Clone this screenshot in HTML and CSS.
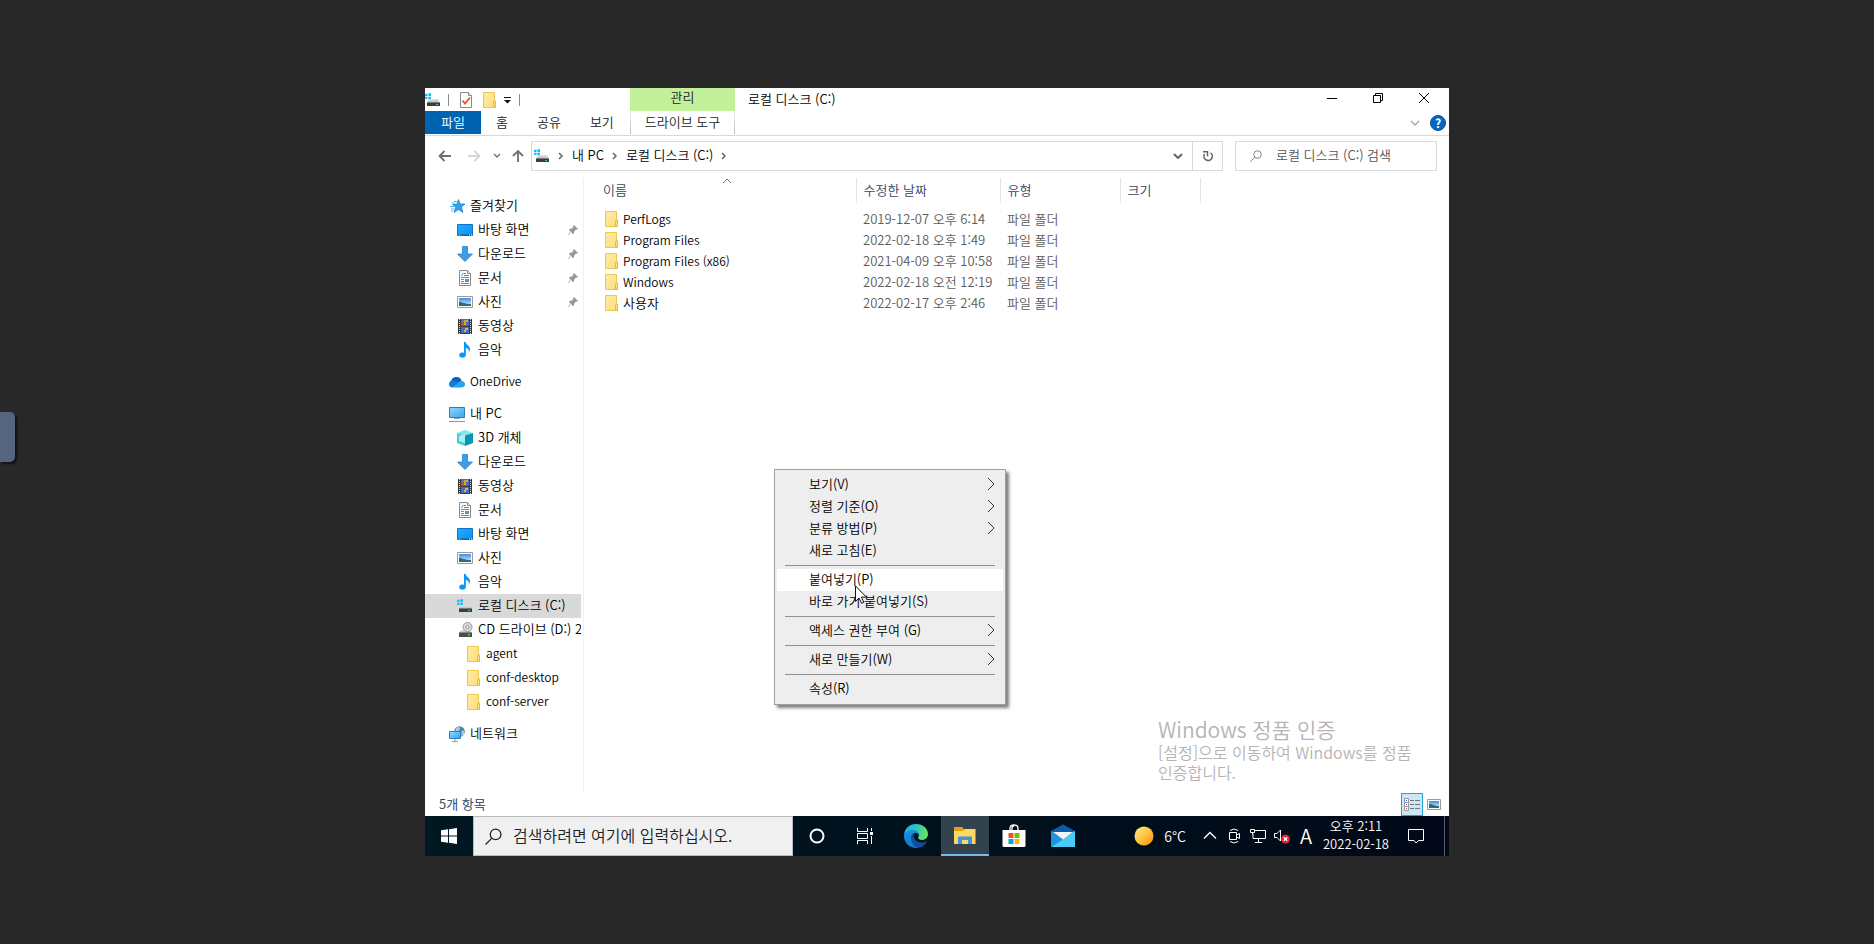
FILE: index.html
```html
<!DOCTYPE html>
<html lang="ko">
<head>
    <meta charset="UTF-8">
    <meta name="viewport" content="width=device-width, initial-scale=1.0">
    <title>로컬 디스크 (C:)</title>
    <link rel="stylesheet" href="styles.css">
</head>
<body>
    <!-- shared icons -->
    <svg class="defs" aria-hidden="true">
        <linearGradient id="g-folder" x1="0" y1="0" x2="1" y2="1"><stop offset="0" stop-color="#ffeca6"/><stop offset="1" stop-color="#fbdc7b"/></linearGradient>
        <linearGradient id="g-blue" x1="0" y1="0" x2="1" y2="1"><stop offset="0" stop-color="#2aa9ff"/><stop offset="1" stop-color="#0a8ff5"/></linearGradient>
        <linearGradient id="g-screen" x1="0" y1="0" x2="1" y2="1"><stop offset="0" stop-color="#8ed8ff"/><stop offset="1" stop-color="#35a5ee"/></linearGradient>
        <linearGradient id="g-sky" x1="0" y1="0" x2="0" y2="1"><stop offset="0" stop-color="#3d8de0"/><stop offset="1" stop-color="#e3f3fb"/></linearGradient>
        <linearGradient id="g-drive" x1="0" y1="0" x2="0" y2="1"><stop offset="0" stop-color="#e4e4e4"/><stop offset="1" stop-color="#b5b5b5"/></linearGradient>
        <symbol id="i-folder" viewBox="-1 0 16 16">
            <path d="M1.500.5h11v9h1v6h-12z" fill="url(#g-folder)" stroke="#ebc84f"/>
            <path d="M11.500 15v-5l1-1h1v6z" fill="#fbe08a" stroke="#e4bd40"/>
        </symbol>
        <symbol id="i-drive" viewBox="0 0 16 16">
            <path d="M0 2l2.500-.4V4H0zM3.300 1.500L6 1v3H3.300zM0 4.800h2.500V7L0 6.700zM3.300 4.800H6v2.700l-2.700-.4z" fill="#19bdf2"/>
            <path d="M4 7h9l2 4H2z" fill="url(#g-drive)"/>
            <path d="M2 10.500h13V14H2z" fill="#3c3c3c"/>
            <path d="M11 12h2v1h-2z" fill="#3fe04a"/>
        </symbol>
        <symbol id="i-cd" viewBox="0 0 16 16">
            <path d="M4 8h9l2 3H2z" fill="url(#g-drive)"/>
            <circle cx="10.500" cy="5" r="4.500" fill="#d9d9d9" stroke="#9a9a9a"/>
            <circle cx="10.500" cy="5" r="1.500" fill="#fff" stroke="#8a8a8a"/>
            <path d="M2 10.500h13V15H2z" fill="#4c4c4c"/>
            <path d="M11 12h2v1.500h-2z" fill="#3fe04a"/>
        </symbol>
        <symbol id="i-star" viewBox="-1 0 16 16">
            <path d="M8.500 1.500L10.300 6H15l-3.600 3 1.600 5.500-4.500-3-4.500 3L5.700 9.300 2.500 6.500 7 6z" fill="#2da0ee" stroke="#1480d0" stroke-width=".7"/>
            <path d="M4 3.500h3M2 5h3M0 8.500h4M1 11h3.500M1 13h2" stroke="#5bb8f3"/>
        </symbol>
        <symbol id="i-desktop" viewBox="0 0 16 16">
            <path d="M.5 2.500h15v11H.5z" fill="url(#g-blue)" stroke="#0b74c5"/>
            <path d="M1 13h14" stroke="#0d5c9c"/>
            <path d="M2 13h1M12 13h1M14 13h1" stroke="#fff"/>
        </symbol>
        <symbol id="i-down" viewBox="0 0 16 16">
            <path d="M5.500.5h5V8h5L8 15.500.5 8h5z" fill="#3f9be8" stroke="#2c83d0" stroke-width=".8"/>
        </symbol>
        <symbol id="i-doc" viewBox="0 0 16 16">
            <path d="M2.500.5h8l3 3v12h-11z" fill="#fff" stroke="#8a8a8a"/>
            <path d="M10.500.5v3h3" fill="#eee" stroke="#8a8a8a"/>
            <path d="M4.500 6L6.500 3M7 3.500h2M7 5.500h5M4 7.500h8M4 9.500h3M4 11.500h3M4 13.500h8" stroke="#2f9adf"/>
            <path d="M8 9h4v3H8z" fill="#5d93b5"/>
        </symbol>
        <symbol id="i-pic" viewBox="0 0 16 16">
            <path d="M.5 2.500h15v11H.5z" fill="#fff" stroke="#9a9a9a"/>
            <path d="M2 4h12v8H2z" fill="url(#g-sky)"/>
            <path d="M2 8c4 0 5 2 12 2v2H2z" fill="#35697a"/>
        </symbol>
        <symbol id="i-video" viewBox="0 0 16 16">
            <path d="M1 1h14v15H1z" fill="#3a3a3a"/>
            <path d="M2.500 1v15M13.500 1v15" stroke="#ddd" stroke-dasharray="1 1"/>
            <path d="M4 1h8v7H4zM4 9h8v6H4z" fill="#3f6fc8"/>
            <path d="M7 2h4v2H9v3H6V5z" fill="#d9a531"/>
            <path d="M5 4h2v3H5z" fill="#b55248"/>
            <path d="M8 10h3v2H9v2H7v-2h1z" fill="#e5b92e"/>
        </symbol>
        <symbol id="i-music" viewBox="0 0 16 16">
            <ellipse cx="5.500" cy="13" rx="3.300" ry="2.600" fill="#0a97f5"/>
            <path d="M7 0h1.800c.2 3 4.700 4 4.200 7.500-.2 1.500-.7 2-1.300 2.800.8-2.800-.9-3.900-2.900-4.300V13H7z" fill="#0a97f5"/>
        </symbol>
        <symbol id="i-cloud" viewBox="0 0 16 16">
            <path d="M2 9C2 5 4 3 7.500 3c3 0 4.500 1.500 5 4L8 12z" fill="#0a62ba"/>
            <path d="M3.500 13.500C1 13.500 0 12 0 10c0-2.500 2-4 4-3.700L11 9z" fill="#117dd8"/>
            <path d="M3 13.500L10 8c3-2 6-.5 6 2.500 0 2-1.500 3-3.500 3z" fill="#27a4ee"/>
        </symbol>
        <symbol id="i-pc" viewBox="0 0 16 16">
            <path d="M.5 1.500h15v10H.5z" fill="url(#g-screen)" stroke="#3479ad"/>
            <path d="M5 12.500h6" stroke="#9aa7b1"/>
            <path d="M0 15.500h16" stroke="#8496a5"/>
        </symbol>
        <symbol id="i-cube" viewBox="0 0 16 16">
            <path d="M0 3l8-3 8 3-8 3z" fill="#87e4ea"/>
            <path d="M0 3l8 2.500V16l-8-3z" fill="#41cfd9"/>
            <path d="M16 3L8 5.500V16l8-3z" fill="#0796ad"/>
            <path d="M2 6l6-2v9l-6-2z" fill="#a9f0f2"/>
        </symbol>
        <symbol id="i-net" viewBox="0 0 16 16">
            <circle cx="10.500" cy="5.500" r="5.300" fill="#3f87ab"/>
            <path d="M7 2c2-2 5-1 4 1S9 5 9 7H6zM13 4l2 1v4l-3 1z" fill="#a3cddb"/>
            <path d="M.5 5.500h11v7H.5z" fill="url(#g-screen)" stroke="#2f7fba"/>
            <path d="M6 13v2M3 15.500h6" stroke="#8fa0ac"/>
        </symbol>
        <symbol id="i-pin" viewBox="0 0 10 10">
            <path d="M6 0l4 4-1 .8-1-.2-1.800 2L6 8.800l-1 .2-1.900-2L.5 10 0 9.500 2.800 6.800 1 5l.2-1 2.200-.2 2-1.800L5.200 1z" fill="#8d99a3"/>
        </symbol>
        <symbol id="i-sub" viewBox="0 0 8 14"><path d="M1 1l6 6-6 6" fill="none" stroke="#333"/></symbol>
        <symbol id="i-crumb" viewBox="0 0 6 8"><path d="M1 1l3 3-3 3" fill="none" stroke="#666" stroke-width="1.500"/></symbol>
        <symbol id="i-chev" viewBox="0 0 10 6"><path d="M1 1l4 4 4-4" fill="none" stroke="currentColor" stroke-width="1.500"/></symbol>
        <symbol id="i-search" viewBox="0 0 16 16"><circle cx="10" cy="6" r="5" fill="none" stroke="currentColor" stroke-width="1.200"/><path d="M6.500 9.500L.5 15.500" stroke="currentColor" stroke-width="1.200"/></symbol>
    </svg>

    <button class="handle" aria-label="메뉴 열기"></button>

    <main class="screen">
        <header class="ribbon">
            <div class="quick">
                <svg class="ico"><use href="#i-drive"/></svg>
                <span class="bar"></span>
                <button aria-label="속성"><svg class="ico" viewBox="0 0 16 16"><path d="M2.500.5h8l3 3v12h-11z" fill="#fff" stroke="#8a8a8a"/><path d="M10.500.5v3h3" fill="#eee" stroke="#8a8a8a"/><path d="M4.500 8.500l2.500 3 5-6" fill="none" stroke="#e0582a" stroke-width="1.800"/></svg></button>
                <button aria-label="새 폴더"><svg class="ico"><use href="#i-folder"/></svg></button>
                <button aria-label="사용자 지정"><svg class="small" viewBox="0 0 8 8"><path d="M0 1.500h7" stroke="#111"/><path d="M0 4h7L3.500 7.500z" fill="#111"/></svg></button>
                <span class="bar"></span>
            </div>
            <div class="context-tab">관리</div>
            <div class="caption">
                <span class="caption-text">로컬 디스크 (C:)</span>
                <button class="win-btn" aria-label="최소화"><svg viewBox="0 0 10 10"><path d="M0 5.500h10" stroke="#000"/></svg></button>
                <button class="win-btn" aria-label="이전 크기로"><svg viewBox="0 0 10 10"><path d="M.5 2.500h7v7h-7zM2.500 2V.5h7v7H8" fill="none" stroke="#000"/></svg></button>
                <button class="win-btn" aria-label="닫기"><svg viewBox="0 0 10 10"><path d="M0 0l10 10M10 0L0 10" stroke="#000"/></svg></button>
            </div>
            <div class="tabs">
                <button class="tab file">파일</button>
                <button class="tab">홈</button>
                <button class="tab">공유</button>
                <button class="tab">보기</button>
            </div>
            <button class="tab drive-tab">드라이브 도구</button>
            <div class="ribbon-end">
                <button aria-label="리본 확장"><svg class="chev light"><use href="#i-chev"/></svg></button>
                <button class="help" aria-label="도움말">?</button>
            </div>
        </header>

        <div class="address-row">
            <button class="go" aria-label="뒤로"><svg viewBox="0 0 14 12"><path d="M13 6H2M6.500 1L1.500 6l5 5" fill="none" stroke="#707070" stroke-width="1.800"/></svg></button>
            <button class="go" aria-label="앞으로"><svg viewBox="0 0 14 12"><path d="M1 6h11M7.500 1l5 5-5 5" fill="none" stroke="#d5d5d5" stroke-width="1.800"/></svg></button>
            <button class="go recent" aria-label="최근 위치"><svg viewBox="0 0 10 6"><path d="M2 1l3 3 3-3" fill="none" stroke="#777" stroke-width="1.500"/></svg></button>
            <button class="go up" aria-label="위로"><svg viewBox="0 0 14 14"><path d="M7 13V2M2 7l5-5 5 5" fill="none" stroke="#707070" stroke-width="1.800"/></svg></button>
            <div class="address">
                <svg class="ico"><use href="#i-drive"/></svg>
                <svg class="crumb"><use href="#i-crumb"/></svg>
                <a href="#">내 PC</a>
                <svg class="crumb"><use href="#i-crumb"/></svg>
                <a href="#">로컬 디스크 (C:)</a>
                <svg class="crumb"><use href="#i-crumb"/></svg>
                <button class="history" aria-label="이전 위치"><svg class="chev" viewBox="0 0 10 6"><path d="M1 1l4 4 4-4" fill="none" stroke="#666" stroke-width="2"/></svg></button>
                <button class="refresh" aria-label="새로 고침"><svg viewBox="0 0 12 12"><path d="M8.500 2.800A4.200 4.200 0 1 1 2.600 4" fill="none" stroke="#666" stroke-width="1.600"/><path d="M1 1.800h4.500v4.500" fill="none" stroke="#666" stroke-width="1.500"/></svg></button>
            </div>
            <label class="find">
                <svg viewBox="0 0 16 16"><use href="#i-search"/></svg>
                <input type="text" placeholder="로컬 디스크 (C:) 검색" aria-label="로컬 디스크 (C:) 검색">
            </label>
        </div>

        <div class="content">
            <nav class="tree">
                <ul>
                    <li><a href="#"><svg class="ico"><use href="#i-star"/></svg>즐겨찾기</a></li>
                    <li class="sub"><a href="#"><svg class="ico"><use href="#i-desktop"/></svg>바탕 화면<svg class="pin"><use href="#i-pin"/></svg></a></li>
                    <li class="sub"><a href="#"><svg class="ico"><use href="#i-down"/></svg>다운로드<svg class="pin"><use href="#i-pin"/></svg></a></li>
                    <li class="sub"><a href="#"><svg class="ico"><use href="#i-doc"/></svg>문서<svg class="pin"><use href="#i-pin"/></svg></a></li>
                    <li class="sub"><a href="#"><svg class="ico"><use href="#i-pic"/></svg>사진<svg class="pin"><use href="#i-pin"/></svg></a></li>
                    <li class="sub"><a href="#"><svg class="ico"><use href="#i-video"/></svg>동영상</a></li>
                    <li class="sub"><a href="#"><svg class="ico"><use href="#i-music"/></svg>음악</a></li>
                </ul>
                <ul>
                    <li class="latin"><a href="#"><svg class="ico"><use href="#i-cloud"/></svg>OneDrive</a></li>
                </ul>
                <ul>
                    <li><a href="#"><svg class="ico"><use href="#i-pc"/></svg>내 PC</a></li>
                    <li class="sub"><a href="#"><svg class="ico"><use href="#i-cube"/></svg>3D 개체</a></li>
                    <li class="sub"><a href="#"><svg class="ico"><use href="#i-down"/></svg>다운로드</a></li>
                    <li class="sub"><a href="#"><svg class="ico"><use href="#i-video"/></svg>동영상</a></li>
                    <li class="sub"><a href="#"><svg class="ico"><use href="#i-doc"/></svg>문서</a></li>
                    <li class="sub"><a href="#"><svg class="ico"><use href="#i-desktop"/></svg>바탕 화면</a></li>
                    <li class="sub"><a href="#"><svg class="ico"><use href="#i-pic"/></svg>사진</a></li>
                    <li class="sub"><a href="#"><svg class="ico"><use href="#i-music"/></svg>음악</a></li>
                    <li class="sub selected"><a href="#"><svg class="ico"><use href="#i-drive"/></svg>로컬 디스크 (C:)</a></li>
                    <li class="sub"><a href="#"><svg class="ico"><use href="#i-cd"/></svg>CD 드라이브 (D:) 2</a></li>
                    <li class="sub2 latin"><a href="#"><svg class="ico"><use href="#i-folder"/></svg>agent</a></li>
                    <li class="sub2 latin"><a href="#"><svg class="ico"><use href="#i-folder"/></svg>conf-desktop</a></li>
                    <li class="sub2 latin"><a href="#"><svg class="ico"><use href="#i-folder"/></svg>conf-server</a></li>
                </ul>
                <ul>
                    <li><a href="#"><svg class="ico"><use href="#i-net"/></svg>네트워크</a></li>
                </ul>
            </nav>

            <section class="files">
                <table>
                    <thead>
                        <tr>
                            <th class="c-name">이름<svg class="sort" viewBox="0 0 10 6"><path d="M1 5l4-4 4 4" fill="none" stroke="#777"/></svg></th>
                            <th class="c-date">수정한 날짜</th>
                            <th class="c-type">유형</th>
                            <th class="c-size">크기</th>
                        </tr>
                    </thead>
                    <tbody>
                        <tr><td><span class="name latin"><svg class="ico"><use href="#i-folder"/></svg>PerfLogs</span></td><td>2019-12-07 오후 6:14</td><td>파일 폴더</td><td></td></tr>
                        <tr><td><span class="name latin"><svg class="ico"><use href="#i-folder"/></svg>Program Files</span></td><td>2022-02-18 오후 1:49</td><td>파일 폴더</td><td></td></tr>
                        <tr><td><span class="name latin"><svg class="ico"><use href="#i-folder"/></svg>Program Files (x86)</span></td><td>2021-04-09 오후 10:58</td><td>파일 폴더</td><td></td></tr>
                        <tr><td><span class="name latin"><svg class="ico"><use href="#i-folder"/></svg>Windows</span></td><td>2022-02-18 오전 12:19</td><td>파일 폴더</td><td></td></tr>
                        <tr><td><span class="name"><svg class="ico"><use href="#i-folder"/></svg>사용자</span></td><td>2022-02-17 오후 2:46</td><td>파일 폴더</td><td></td></tr>
                    </tbody>
                </table>
                <div class="watermark">
                    <p class="wm-title">Windows 정품 인증</p>
                    <p>[설정]으로 이동하여 Windows를 정품<br>인증합니다.</p>
                </div>
            </section>
        </div>

        <div class="status">
            <span class="count">5개 항목</span>
            <button class="view on" aria-label="자세히"><svg viewBox="0 0 16 14"><path d="M.5.500h4v4h-4zM.5 4.500h4v4h-4zM.5 8.500h4v4h-4z" fill="#fff" stroke="#999"/><path d="M6 2.500h4M11 2.500h5M6 6.500h4M11 6.500h5M6 10.500h4M11 10.500h5" stroke="#777"/><path d="M2 2h1v1H2zM2 6h1v1H2z" fill="#46c"/><path d="M2 10h1v1H2z" fill="#d33"/></svg></button>
            <button class="view" aria-label="큰 아이콘"><svg viewBox="0 0 16 14"><path d="M1.500 1.500h13v10h-13z" fill="#fff" stroke="#999"/><path d="M3 3h10v7H3z" fill="url(#g-sky)"/><path d="M3 6c4 0 5 2 10 2v2H3z" fill="#35697a"/></svg></button>
        </div>

        <footer class="taskbar">
            <button class="start" aria-label="시작"><svg viewBox="0 0 16 16"><path d="M0 2.300l7-1v6.200H0zM8 1.200L16 0v7.500H8zM0 8.500h7v6.200l-7-1zM8 8.500h8V16l-8-1.200z" fill="#fff"/></svg></button>
            <label class="task-search">
                <svg viewBox="0 0 16 16"><use href="#i-search"/></svg>
                <input type="text" placeholder="검색하려면 여기에 입력하십시오." aria-label="검색하려면 여기에 입력하십시오.">
            </label>
            <button class="task" aria-label="Cortana"><svg viewBox="0 0 24 24"><circle cx="12" cy="12" r="6.500" fill="none" stroke="#fff" stroke-width="2"/></svg></button>
            <button class="task" aria-label="작업 보기"><svg viewBox="0 0 24 24"><path d="M4.500 4v3.500h10V4M4.500 20v-3.500h10V20M4.500 9.500h10v5h-10zM18.500 4v3M18.500 12v8" fill="none" stroke="#fff"/><path d="M17 8h3v3h-3z" fill="#fff"/></svg></button>
            <div class="pins">
                <button class="task" aria-label="Microsoft Edge"><svg viewBox="0 0 24 24">
                    <defs>
                        <linearGradient id="e1" x1="0" y1=".3" x2="1" y2=".5"><stop offset="0" stop-color="#2aa9e8"/><stop offset=".5" stop-color="#2fc7c0"/><stop offset="1" stop-color="#68e455"/></linearGradient>
                        <linearGradient id="e2" x1="0" y1="0" x2="0" y2="1"><stop offset="0" stop-color="#1995e0"/><stop offset="1" stop-color="#1373cf"/></linearGradient>
                    </defs>
                    <path d="M0 11C.5 4.500 5.500 0 12 0c7 0 12 4.800 12 10 0 3.800-2.800 6-6 6-2.600 0-4-1-4-2.200 0-.8.900-1.100.9-2.800C14.900 8.500 12.500 6.500 9 6.500 5 6.500 1.500 8.500 0 11z" fill="url(#e1)"/>
                    <path d="M0 12c0-3.500 3.500-6 8-6 3.800 0 6.900 2 6.900 5-1-1.500-2.200-2-3.500-2C9 9 7.500 11.500 7.500 14c0 5 4 9.500 7.500 9.500-1 .4-2 .5-3 .5C5.500 24 0 19 0 12z" fill="url(#e2)"/>
                    <path d="M7 13.500c0-2.500 1.500-4.300 3-4.500-1 4 1 9.500 7.500 9.500 2 0 3.700-.6 4.700-1.300.5-.3.800.1.500.6C21 21 18 23.600 15 23.600c-4.500 0-8-4.600-8-10.100z" fill="#104f9e"/>
                </svg></button>
                <button class="task active" aria-label="파일 탐색기"><svg viewBox="0 0 24 24"><path d="M1 3h8l2 2h11v15H1z" fill="#e2a01a"/><path d="M1 7h9l2-2h10.500v15H1z" fill="#ffd863"/><path d="M5 20v-7.500L6.500 13h11l1.500-.5V20h-4v-4H9v4z" fill="#3f95dd"/><path d="M6 12.500h12v3H6z" fill="#3f95dd"/></svg></button>
                <button class="task" aria-label="Microsoft Store"><svg viewBox="0 0 24 24"><path d="M8 6V4.500C8 2 9.500.8 12 .8S16 2 16 4.500V6M10 6V4c0-1.500 1-2.200 2.500-2.200" fill="none" stroke="#fff" stroke-width="1.300"/><path d="M.5 6h23v15.500q0 1.500-1.500 1.500H2q-1.500 0-1.500-1.500z" fill="#fff"/><path d="M6.500 9h5v5h-5z" fill="#f25022"/><path d="M12.500 9h5v5h-5z" fill="#7fba00"/><path d="M6.500 15h5v5h-5z" fill="#00a4ef"/><path d="M12.500 15h5v5h-5z" fill="#ffb900"/></svg></button>
                <button class="task" aria-label="메일"><svg viewBox="0 0 24 24"><path d="M0 7l12-6.500L24 7v3H0z" fill="#0b5cab"/><path d="M0 7l12 8.500L24 7v16H0z" fill="#2cb4ea"/><path d="M0 23L24 7v16z" fill="#4acbf5"/><path d="M0 7l12 8.500L0 23z" fill="#1f94dc"/><path d="M2 8h20l-10 7.500z" fill="#f3f3f3"/></svg></button>
            </div>
            <div class="tray">
                <button class="weather"><svg viewBox="0 0 20 20"><defs><linearGradient id="sun" x1="0" y1="0" x2="1" y2="1"><stop offset="0" stop-color="#ffe98a"/><stop offset=".5" stop-color="#ffc443"/><stop offset="1" stop-color="#fb8900"/></linearGradient></defs><circle cx="10" cy="10" r="9.500" fill="url(#sun)"/></svg>6°C</button>
                <button class="t" aria-label="숨겨진 아이콘"><svg viewBox="0 0 16 16"><path d="M2 10.500l6-6 6 6" fill="none" stroke="#fff" stroke-width="1.300"/></svg></button>
                <button class="t" aria-label="카메라"><svg viewBox="0 0 16 16"><path d="M3.500 4.500h7v7h-7zM10.500 7l3-1.500v5l-3-1.500M4 2.500q4-3 8 0M4 13.500q4 3 8 0" fill="none" stroke="#fff"/></svg></button>
                <button class="t" aria-label="네트워크"><svg viewBox="0 0 16 16"><path d="M5 2.500h10.500v8H3V6M8.500 11v3M5 14.500h7M.5 1.500h4v3h-4zM2.500 4.500v2" fill="none" stroke="#fff"/></svg></button>
                <button class="t" aria-label="음소거"><svg viewBox="0 0 16 16"><path d="M.5 5.500H3L6.500 2v11L3 9.500H.5z" fill="none" stroke="#fff"/><circle cx="11.500" cy="11" r="4.500" fill="#d92632"/><path d="M9.800 9.300l3.400 3.400M13.200 9.300l-3.400 3.400" stroke="#fff" stroke-width="1.300"/></svg></button>
                <button class="t ime">A</button>
                <button class="clock">오후 2:11<br>2022-02-18</button>
                <button class="notes" aria-label="알림 센터"><svg viewBox="0 0 16 16"><path d="M.5 1.500h15v11h-5L8 15l-2-2.500H.5z" fill="none" stroke="#fff"/></svg></button>
                <button class="peek" aria-label="바탕 화면 보기"></button>
            </div>
        </footer>

        <div class="menu" role="menu">
            <button role="menuitem">보기(V)<svg><use href="#i-sub"/></svg></button>
            <button role="menuitem">정렬 기준(O)<svg><use href="#i-sub"/></svg></button>
            <button role="menuitem">분류 방법(P)<svg><use href="#i-sub"/></svg></button>
            <button role="menuitem">새로 고침(E)</button>
            <hr>
            <button role="menuitem" class="hover">붙여넣기(P)</button>
            <button role="menuitem">바로 가기 붙여넣기(S)</button>
            <hr>
            <button role="menuitem">액세스 권한 부여 (G)<svg><use href="#i-sub"/></svg></button>
            <hr>
            <button role="menuitem">새로 만들기(W)<svg><use href="#i-sub"/></svg></button>
            <hr>
            <button role="menuitem">속성(R)</button>
        </div>
        <svg class="cursor" viewBox="0 0 12 19"><path d="M.5.900v15.500l3.600-3.400 2.500 5.300 2.200-1-2.400-5.200h4.900z" fill="#fff" stroke="#111"/></svg>
    </main>
</body>
</html>
```
FILE: styles.css
```css
* {
    box-sizing: border-box;
}

body {
    margin: 0;
    min-height: 100vh;
    display: flex;
    align-items: center;
    justify-content: center;
    background: #282828;
    font-family: "Noto Sans CJK KR", sans-serif;
    font-size: 13px;
    font-weight: 350;
    line-height: 16px;
    color: #000;
}

button, input {
    font: inherit;
    color: inherit;
    background: none;
    border: 0;
    padding: 0;
    margin: 0;
}

button {
    display: flex;
    align-items: center;
    justify-content: center;
    white-space: nowrap;
}

a {
    color: inherit;
    text-decoration: none;
}

svg {
    display: block;
    flex: none;
}

.defs {
    position: absolute;
    width: 0;
    height: 0;
}

.ico {
    width: 16px;
    height: 16px;
}

.latin {
    font-size: 12px;
}

/* side panel handle of the remote viewer */
.handle {
    position: absolute;
    left: 0;
    top: 412px;
    width: 15px;
    height: 50px;
    background: #56657f;
    border-radius: 0 5px 5px 0;
    box-shadow: 2px 2px 2px #111;
}

.screen {
    position: relative;
    width: 100%;
    max-width: 1024px;
    aspect-ratio: 4 / 3;
    display: flex;
    flex-direction: column;
    background: #fff;
}

/* title bar and ribbon tabs */
.ribbon {
    display: grid;
    grid-template-columns: 205px 105px 1fr;
    grid-template-rows: 23px 24px;
    border-bottom: 1px solid #d9d9d9;
    color: #222;
}

.quick {
    display: flex;
    align-items: center;
    gap: 7px;
}

.bar {
    width: 1px;
    height: 12px;
    background: #888;
}

.bar + button {
    margin-left: 2px;
}

.small {
    width: 8px;
    height: 8px;
}

.context-tab {
    background: #c3f09b;
    text-align: center;
    line-height: 18px;
}

.caption {
    display: flex;
    padding: 0 2px 0 13px;
    color: #000;
    line-height: 22px;
}

.caption-text {
    flex: 1;
}

.win-btn {
    width: 46px;
    height: 20px;
}

.win-btn svg {
    width: 10px;
    height: 10px;
}

.tabs {
    display: flex;
    gap: 1px;
}

.tab {
    height: 23px;
    padding: 0 14px 2px;
}

.file {
    width: 56px;
    background: #0063b1;
    color: #fff;
}

.drive-tab {
    padding: 0 0 2px;
    border: 1px solid;
    border-width: 0 1px;
    border-image: linear-gradient(#eee, #bbb) 1;
}

.ribbon-end {
    display: flex;
    align-items: center;
    justify-content: flex-end;
    gap: 10px;
    padding-right: 3px;
}

.chev {
    width: 10px;
    height: 6px;
}

.light {
    color: #aaa;
}

.help {
    width: 16px;
    height: 16px;
    border-radius: 8px;
    background: #0667c2;
    border: 1px solid #06508f;
    color: #fff;
    font-size: 12px;
    font-weight: bold;
}

/* address bar */
.address-row {
    display: flex;
    align-items: center;
    height: 30px;
    margin: 5px 12px 7px 5px;
}

.go {
    width: 29px;
}

.go svg {
    width: 14px;
    height: 14px;
}

.recent {
    width: 17px;
}

.recent svg {
    width: 10px;
    height: 6px;
}

.up {
    width: 26px;
}

.address {
    flex: 1;
    height: 30px;
    display: flex;
    align-items: center;
    gap: 8px;
    padding-left: 2px;
    border: 1px solid #d9d9d9;
}

.address a {
    padding-bottom: 2px;
}

.crumb {
    width: 6px;
    height: 8px;
}

.history {
    margin-left: auto;
    width: 28px;
    height: 28px;
}

.refresh {
    width: 30px;
    height: 28px;
    margin-left: -8px;
    border-left: 1px solid #d9d9d9;
}

.refresh svg {
    width: 12px;
    height: 12px;
}

.find {
    display: flex;
    align-items: center;
    gap: 14px;
    width: 202px;
    height: 30px;
    margin-left: 12px;
    padding-left: 14px;
    border: 1px solid #d9d9d9;
    color: #777;
}

.find svg {
    width: 12px;
    height: 12px;
}

input {
    flex: 1;
    min-width: 0;
    padding-bottom: 2px;
    outline: 0;
}

input::placeholder {
    color: inherit;
    opacity: 1;
}

.find input {
    color: #555;
}

/* navigation tree and file list */
.content {
    flex: 1;
    min-height: 0;
    display: flex;
}

.tree {
    width: 159px;
    padding: 16px 2px 0 0;
    border-right: 1px solid #f0f0f0;
}

.tree ul {
    list-style: none;
    margin: 0 0 8px;
    padding: 0;
}

.tree a {
    display: flex;
    align-items: center;
    gap: 5px;
    height: 24px;
    padding: 0 0 2px 24px;
    white-space: nowrap;
    overflow: hidden;
}

.tree .sub a {
    padding-left: 32px;
}

.tree .sub2 a {
    padding-left: 40px;
}

.tree .ico {
    margin-top: 2px;
}

.selected {
    background: #d9d9d9;
}

.pin {
    width: 10px;
    height: 10px;
    margin: 2px 3px 0 auto;
}

.files {
    flex: 1;
    display: flex;
    flex-direction: column;
    justify-content: space-between;
}

table {
    width: 616px;
    table-layout: fixed;
    border-collapse: collapse;
}

th {
    position: relative;
    height: 25px;
    padding: 0 0 2px 7px;
    border-right: 1px solid #e5e5e5;
    font-weight: inherit;
    text-align: left;
    color: #33455f;
}

.c-name {
    width: 272px;
    padding-left: 19px;
}

.c-date {
    width: 144px;
}

.c-type {
    width: 120px;
}

.c-size {
    width: 80px;
}

.sort {
    position: absolute;
    left: 138px;
    top: 0;
    width: 10px;
    height: 6px;
}

tbody::before {
    content: "";
    display: block;
    height: 5px;
}

td {
    height: 21px;
    padding: 0 0 0 7px;
    color: #5c5c5c;
    white-space: nowrap;
}

.name {
    display: flex;
    align-items: center;
    gap: 4px;
    padding-left: 12px;
    color: #000;
}

.watermark {
    align-self: flex-end;
    width: 291px;
    margin-bottom: 11px;
    font-size: 16px;
    line-height: 20px;
    color: #b4b4b4;
}

.watermark p {
    margin: 0;
}

.watermark .wm-title {
    font-size: 21px;
    line-height: 26px;
}

.status {
    display: flex;
    height: 23px;
    padding-right: 4px;
    color: #1e395b;
}

.count {
    flex: 1;
    padding: 3px 0 0 14px;
}

.view {
    width: 22px;
    border: 1px solid transparent;
}

.view svg {
    width: 16px;
    height: 14px;
}

.on {
    background: #cbe8f6;
    border-color: #26a0da;
}

/* taskbar */
.taskbar {
    display: flex;
    height: 40px;
    background: linear-gradient(90deg, #001820, #00101c 60%, #020818);
    color: #fff;
}

.start {
    width: 48px;
}

.start svg {
    width: 16px;
    height: 16px;
}

.task-search {
    display: flex;
    align-items: center;
    gap: 11px;
    width: 320px;
    padding-left: 11px;
    background: #f0f0f0;
    border: 1px solid #bbb;
    color: #222;
    font-size: 16px;
}

.task-search svg {
    width: 17px;
    height: 17px;
}

.task {
    width: 48px;
    height: 40px;
    border: solid transparent;
    border-width: 2px 0;
}

.task svg {
    width: 24px;
    height: 24px;
}

.pins {
    display: flex;
    gap: 1px;
    padding-left: 3px;
}

.active {
    background: #33434e;
    border-bottom-color: #76b9ed;
}

.tray {
    display: flex;
    align-items: center;
    margin-left: auto;
}

.weather {
    gap: 10px;
    margin-right: 12px;
    font-size: 14px;
}

.weather svg {
    width: 20px;
    height: 20px;
}

.t {
    width: 24px;
}

.t svg, .notes svg {
    width: 16px;
    height: 16px;
}

.ime {
    font-size: 20px;
}

.clock {
    width: 76px;
    padding-bottom: 2px;
    line-height: 18px;
}

.notes {
    width: 44px;
}

.peek {
    width: 5px;
    height: 40px;
    margin-left: 6px;
    border-left: 1px solid #555d68;
}

/* context menu lies over the file list */
.menu {
    position: absolute;
    left: 349px;
    top: 381px;
    width: 232px;
    padding: 4px 2px;
    background: #eee;
    border: 1px solid #a0a0a0;
    box-shadow: 3px 3px 3px rgba(0, 0, 0, 0.5);
}

.menu button {
    width: 100%;
    height: 22px;
    padding: 0 8px 2px 32px;
    justify-content: space-between;
}

.menu .hover {
    background: #fff;
}

.menu svg {
    width: 8px;
    height: 14px;
}

.menu hr {
    height: 1px;
    margin: 3px 8px;
    border: 0;
    background: #919191;
}

.cursor {
    position: absolute;
    left: 430px;
    top: 497px;
    width: 12px;
    height: 19px;
}
```
